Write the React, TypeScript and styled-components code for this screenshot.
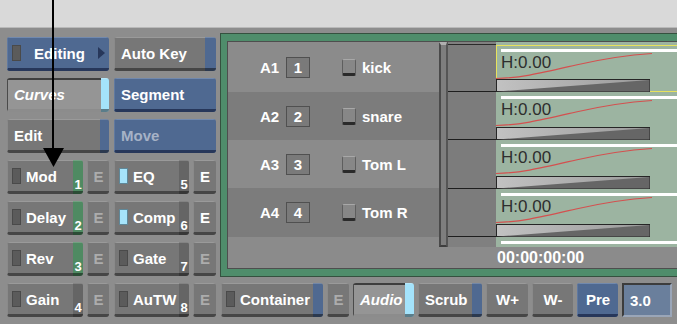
import React from "react";
import styled, { createGlobalStyle } from "styled-components";

type Tone = "gray" | "blue" | "pressed";

const tones: Record<Tone, { face: string; top: string; bottom: string; left: string }> = {
    gray: { face: "#777777", top: "#9a9a9a", bottom: "#464646", left: "#8a8a8a" },
    blue: { face: "#4f6991", top: "#7189ae", bottom: "#27375a", left: "#6079a0" },
    pressed: { face: "#959595", top: "#3e3e3e", bottom: "#8c8c8c", left: "#4a4a4a" },
};

const Global = createGlobalStyle`
    html, body { margin:0; padding:0; }
    body {
        width:677px;
        height:324px;
        overflow:hidden;
        background:#8d8d8d;
        font-family:"Liberation Sans", Arial, sans-serif;
    }
`;

const Screen = styled.div`
    position:relative;
    width:677px;
    height:324px;
    overflow:hidden;
    background:#8d8d8d;
`;
const TopStrip = styled.div`
    height:28px;
    background:#d9d9d9;
    border-bottom:1px solid #b9b9b9;
    box-sizing:border-box;
`;
const Main = styled.div`
    display:flex;
    gap:4px;
    padding:5px 0 0 7px;
`;
const LeftGrid = styled.div`
    display:grid;
    grid-template-columns:102px 102px;
    grid-auto-rows:34px;
    column-gap:5px;
    row-gap:7px;
    margin-top:4px;
    flex-shrink:0;
`;
const Pair = styled.div`
    display:flex;
    gap:4px;
`;
const Btn = styled.div<{ $w?: number }>`
    display:flex;
    height:34px;
    width:${p => (p.$w ? p.$w + "px" : "100%")};
    flex-shrink:0;
    border-radius:3px;
    overflow:hidden;
`;
const Face = styled.div<{ $tone: Tone; $between?: boolean; $center?: boolean; $italic?: boolean; $dim?: boolean }>`
    flex:1;
    min-width:0;
    display:flex;
    align-items:center;
    justify-content:${p => (p.$center ? "center" : p.$between ? "space-between" : "flex-start")};
    gap:5px;
    padding:0 ${p => (p.$center ? 0 : 4)}px 0 ${p => (p.$center ? 0 : 4)}px;
    box-sizing:border-box;
    background:${p => tones[p.$tone].face};
    border-top:${p => (p.$tone === "pressed" ? 2 : 1)}px solid ${p => tones[p.$tone].top};
    border-left:1px solid ${p => tones[p.$tone].left};
    border-bottom:3px solid ${p => tones[p.$tone].bottom};
    color:${p => (p.$dim ? "#a6b2c6" : "#ffffff")};
    font-size:15px;
    font-weight:bold;
    font-style:${p => (p.$italic ? "italic" : "normal")};
    white-space:nowrap;
`;
const Label = styled.span<{ $grow?: boolean }>`
    flex:${p => (p.$grow ? 1 : "none")};
    text-align:center;
    padding-left:${p => (p.$grow ? 0 : 2)}px;
`;
const Stripe = styled.div<{ $c: string; $w?: number }>`
    width:${p => p.$w ?? 10}px;
    flex-shrink:0;
    background:${p => p.$c};
    border-top:1px solid rgba(255,255,255,0.2);
    border-bottom:3px solid rgba(0,0,0,0.45);
    display:flex;
    align-items:flex-end;
    justify-content:center;
    color:#ffffff;
    font-size:13px;
    font-weight:bold;
    line-height:13px;
`;
const ELabel = styled.span<{ $lit?: boolean }>`
    color:${p => (p.$lit ? "#ffffff" : "#acacac")};
`;
const Led = styled.span<{ $on?: boolean }>`
    width:7px;
    height:14px;
    flex-shrink:0;
    background:${p => (p.$on ? "#a6e4fb" : "#5b5b5b")};
    border:1px solid ${p => (p.$on ? "#5f8899" : "#4a4a4a")};
`;
const Tri = styled.span`
    width:0;
    height:0;
    border-top:6px solid transparent;
    border-bottom:6px solid transparent;
    border-left:7px solid #27375a;
`;

const RightCol = styled.div`
    width:470px;
    flex-shrink:0;
    display:flex;
    flex-direction:column;
    gap:6px;
`;
const Frame = styled.div`
    height:244px;
    box-sizing:border-box;
    background:#4f8d6b;
    border:1px solid #35513f;
    padding:7px 0 7px 6px;
    display:flex;
`;
const Inner = styled.div`
    flex:1;
    display:flex;
    flex-direction:column;
    background:#8b8b8b;
    border:1px solid #4e4e4e;
    border-right:none;
`;
const TrackArea = styled.div`
    height:205px;
    display:flex;
`;
const TrackList = styled.div`
    width:211px;
    flex-shrink:0;
    display:flex;
    flex-direction:column;
`;
const TrackRow = styled.div<{ $alt?: boolean; $h: number }>`
    height:${p => p.$h}px;
    display:flex;
    align-items:center;
    padding-left:32px;
    background:${p => (p.$alt ? "#7c7c7c" : "#8b8b8b")};
    color:#ffffff;
    font-size:15px;
    font-weight:bold;
`;
const TrackId = styled.span`
    width:26px;
`;
const NumBox = styled.span`
    width:24px;
    height:21px;
    box-sizing:border-box;
    border:1px solid #505050;
    background:#7a7a7a;
    display:flex;
    align-items:center;
    justify-content:center;
    margin-right:32px;
`;
const Check = styled.span`
    display:block;
    width:14px;
    height:17px;
    flex-shrink:0;
    box-sizing:border-box;
    background:#878787;
    border:1px solid #5e5e5e;
    border-top-color:#a8a8a8;
    border-bottom:3px solid #2a2a2a;
    border-radius:2px;
    margin-right:6px;
`;
const Scroll = styled.div`
    width:8px;
    flex-shrink:0;
    box-sizing:border-box;
    background:#7e7e7e;
    border-left:2px solid #4a4a4a;
    border-right:1px solid #555555;
    border-top:3px solid #b0b0b0;
    border-bottom:2px solid #3e3e3e;
    height:205px;
`;
const HeadCol = styled.div`
    width:49px;
    flex-shrink:0;
    padding-top:2px;
    display:flex;
    flex-direction:column;
    background:#808080;
    border-left:1px solid #555555;
    box-sizing:border-box;
`;
const HeadCell = styled.div<{ $h: number; $first?: boolean }>`
    height:${p => p.$h}px;
    box-sizing:border-box;
    background:#7c7c7c;
    border-top:${p => (p.$first ? "1px solid #2a2a2a" : "none")};
    border-bottom:1px solid #1e1e1e;
`;
const Lanes = styled.div`
    flex:1;
    padding-top:3px;
    display:flex;
    flex-direction:column;
    background:#9cb4a1;
    overflow:hidden;
`;
const Clip = styled.div<{ $h: number; $sel?: boolean }>`
    position:relative;
    height:${p => p.$h}px;
    box-sizing:border-box;
    flex-shrink:0;
    display:flex;
    flex-direction:column;
    border:1px solid ${p => (p.$sel ? "#e8e25c" : "transparent")};
`;
const WhiteLine = styled.div`
    height:3px;
    margin:3px 0 0 4px;
    background:#ffffff;
`;
const Gain = styled.div`
    margin:1px 0 0 4px;
    font-size:17px;
    line-height:20px;
    color:#2e2e2e;
`;
const Spacer = styled.div`
    flex:1;
`;
const Curve = styled.svg`
    position:absolute;
    left:-1px;
    top:0;
`;
const BarSvg = styled.svg`
    display:block;
    margin-left:-1px;
    margin-bottom:-1px;
`;
const Footer = styled.div`
    flex:1;
    padding-left:269px;
    display:flex;
    align-items:center;
    color:#ffffff;
    font-size:16px;
    font-weight:bold;
`;
const BottomBar = styled.div`
    display:flex;
    gap:4px;
    padding-left:1px;
`;
const ValueField = styled.div`
    width:50px;
    height:34px;
    box-sizing:border-box;
    background:#6a7f9c;
    border:2px solid #3c3c3c;
    border-right-color:#9aa6b8;
    border-bottom-color:#9aa6b8;
    color:#ffffff;
    font-size:15px;
    font-weight:bold;
    display:flex;
    align-items:center;
    padding-left:6px;
`;
const Arrow = styled.svg`
    position:absolute;
    left:40px;
    top:0;
`;

const GREEN = "#4f8a62";
const BLUE = "#4f6991";
const DARK = "#656565";
const LIGHT = "#a4e3fb";

const FxBtn = (p: { name: string; num: string; stripe: string; on?: boolean; eLit?: boolean; w: number; ew: number }) => (
    <Pair>
        <Btn $w={p.w}>
            <Face $tone="gray">
                <Led $on={p.on} />
                {p.name}
            </Face>
            <Stripe $c={p.stripe}>{p.num}</Stripe>
        </Btn>
        <Btn $w={p.ew}>
            <Face $tone="gray" $center>
                <ELabel $lit={p.eLit}>E</ELabel>
            </Face>
        </Btn>
    </Pair>
);

const tracks = [
    { id: "A1", n: "1", name: "kick", h: 50 },
    { id: "A2", n: "2", name: "snare", h: 48 },
    { id: "A3", n: "3", name: "Tom L", h: 48 },
    { id: "A4", n: "4", name: "Tom R", h: 49 },
];
const clipHeights = [47, 48, 49, 48];

const ClipBody = ({ h, sel }: { h: number; sel?: boolean }) => (
    <Clip $h={h} $sel={sel}>
        <WhiteLine />
        <Gain>H:0.00</Gain>
        <Spacer />
        <BarSvg width="154" height="13" viewBox="0 0 154 13">
            <defs>
                <linearGradient id="bg" x1="0" x2="1" y1="0" y2="0">
                    <stop offset="0" stopColor="#c2c2c2" />
                    <stop offset="1" stopColor="#9a9a9a" />
                </linearGradient>
            </defs>
            <rect x="0.5" y="0.5" width="153" height="12" fill="url(#bg)" stroke="#262626" />
            <polygon points="1,12.5 153.5,1 153.5,12.5" fill="#666666" />
        </BarSvg>
        <Curve width="160" height="40" viewBox="0 0 160 40">
            <path d="M0 32.5 C 25 32, 45 27, 80 19 S 140 8.5, 156 7.5" fill="none" stroke="#d4504f" strokeWidth="1.2" />
        </Curve>
    </Clip>
);

export default function App() {
    return (
        <Screen>
            <Global />
            <TopStrip />
            <Main>
                <LeftGrid>
                    <Btn>
                        <Face $tone="blue" $between>
                            <Led />
                            <Label $grow>Editing</Label>
                            <Tri />
                        </Face>
                    </Btn>
                    <Btn>
                        <Face $tone="gray">
                            <Label>Auto Key</Label>
                        </Face>
                        <Stripe $c={BLUE} $w={11} />
                    </Btn>
                    <Btn>
                        <Face $tone="pressed" $italic>
                            <Label>Curves</Label>
                        </Face>
                        <Stripe $c={LIGHT} $w={8} />
                    </Btn>
                    <Btn>
                        <Face $tone="blue">
                            <Label>Segment</Label>
                        </Face>
                    </Btn>
                    <Btn>
                        <Face $tone="gray">
                            <Label>Edit</Label>
                        </Face>
                        <Stripe $c={BLUE} $w={9} />
                    </Btn>
                    <Btn>
                        <Face $tone="blue" $dim>
                            <Label>Move</Label>
                        </Face>
                    </Btn>
                    <FxBtn name="Mod" num="1" stripe={GREEN} w={76} ew={22} />
                    <FxBtn name="EQ" num="5" stripe={DARK} on eLit w={75} ew={23} />
                    <FxBtn name="Delay" num="2" stripe={GREEN} w={76} ew={22} />
                    <FxBtn name="Comp" num="6" stripe={DARK} on eLit w={75} ew={23} />
                    <FxBtn name="Rev" num="3" stripe={GREEN} w={76} ew={22} />
                    <FxBtn name="Gate" num="7" stripe={DARK} w={75} ew={23} />
                    <FxBtn name="Gain" num="4" stripe={DARK} w={76} ew={22} />
                    <FxBtn name="AuTW" num="8" stripe={DARK} w={75} ew={23} />
                </LeftGrid>
                <RightCol>
                    <Frame>
                        <Inner>
                            <TrackArea>
                                <TrackList>
                                    {tracks.map((t, i) => (
                                        <TrackRow key={t.id} $h={t.h} $alt={i % 2 === 1}>
                                            <TrackId>{t.id}</TrackId>
                                            <NumBox>{t.n}</NumBox>
                                            <Check />
                                            {t.name}
                                        </TrackRow>
                                    ))}
                                </TrackList>
                                <Scroll />
                                <HeadCol>
                                    {clipHeights.map((h, i) => (
                                        <HeadCell key={i} $h={i === 0 ? h + 1 : h} $first={i === 0} />
                                    ))}
                                </HeadCol>
                                <Lanes>
                                    {clipHeights.map((h, i) => (
                                        <ClipBody key={i} h={h} sel={i === 0} />
                                    ))}
                                    <Clip $h={10}>
                                        <WhiteLine />
                                    </Clip>
                                </Lanes>
                            </TrackArea>
                            <Footer>00:00:00:00</Footer>
                        </Inner>
                    </Frame>
                    <BottomBar>
                        <Btn $w={102}>
                            <Face $tone="gray">
                                <Led />
                                Container
                            </Face>
                            <Stripe $c={BLUE} />
                        </Btn>
                        <Btn $w={22}>
                            <Face $tone="gray" $center>
                                <ELabel>E</ELabel>
                            </Face>
                        </Btn>
                        <Btn $w={61}>
                            <Face $tone="pressed" $italic>
                                <Label>Audio</Label>
                            </Face>
                            <Stripe $c={LIGHT} $w={9} />
                        </Btn>
                        <Btn $w={64}>
                            <Face $tone="gray">
                                <Label>Scrub</Label>
                            </Face>
                            <Stripe $c={BLUE} />
                        </Btn>
                        <Btn $w={42}>
                            <Face $tone="gray" $center>W+</Face>
                        </Btn>
                        <Btn $w={41}>
                            <Face $tone="gray" $center>W-</Face>
                        </Btn>
                        <Btn $w={41}>
                            <Face $tone="blue" $center>Pre</Face>
                        </Btn>
                        <ValueField>3.0</ValueField>
                    </BottomBar>
                </RightCol>
            </Main>
            <Arrow width="28" height="170" viewBox="0 0 28 170">
                <line x1="13" y1="0" x2="13" y2="150" stroke="#000" strokeWidth="2" />
                <polygon points="3,148 24,148 13.5,167" fill="#000" />
            </Arrow>
        </Screen>
    );
}
